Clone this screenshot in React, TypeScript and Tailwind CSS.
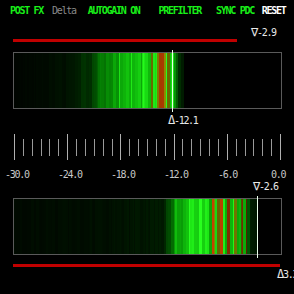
import React from "react";

type Pt = [number, number];

function lerp(points: Pt[], x: number) {
  if (x <= points[0][0]) return points[0][1];
  for (let i = 1; i < points.length; i++) {
    const [x1, y1] = points[i];
    const [x0, y0] = points[i - 1];
    if (x <= x1) return y0 + ((y1 - y0) * (x - x0)) / (x1 - x0);
  }
  return points[points.length - 1][1];
}

function makeRand(seed: number) {
  let s = seed;
  return () => {
    s = (s * 16807) % 2147483647;
    return s / 2147483647;
  };
}

// left edge of the meter box on the page
const BOX_X = 14;

function stripes(level: Pt[], red: [number, number], seed: number) {
  const rand = makeRand(seed);
  const out: { x: number; w: number; fill: string }[] = [];
  let x = BOX_X;
  while (x < 281) {
    const w = 1 + Math.floor(rand() * 3);
    const base = lerp(level, x);
    if (base > 0.005) {
      const l = Math.min(1, base * (0.7 + rand() * 0.45));
      let r = Math.round(40 * l * l * l);
      let g = Math.round(255 * l);
      let b = Math.round(30 * l * l * l);
      if (x >= red[0] && x <= red[1]) {
        const k = rand();
        if (k < 0.2) {
          r = Math.round(205 * l);
          g = Math.round(70 * l);
          b = 0;
        } else if (k < 0.45) {
          r = Math.round(140 * l);
          g = Math.round(140 * l);
          b = 0;
        }
      }
      out.push({ x: x - BOX_X, w, fill: `rgb(${r},${g},${b})` });
    }
    x += w;
  }
  return out;
}

const topBars = stripes(
  [
    [14, 0.02],
    [40, 0.04],
    [70, 0.08],
    [88, 0.22],
    [103, 0.5],
    [118, 0.78],
    [140, 0.92],
    [165, 0.95],
    [172, 0.85],
    [177, 0.3],
    [182, 0.05],
    [183, 0],
  ],
  [148, 167],
  11
);

const bottomBars = stripes(
  [
    [14, 0.04],
    [100, 0.06],
    [160, 0.1],
    [170, 0.35],
    [178, 0.85],
    [200, 0.95],
    [240, 0.85],
    [246, 0.45],
    [250, 0.15],
    [256, 0.08],
    [257, 0],
  ],
  [204, 246],
  29
);

function Meter({
  bars,
  marker,
}: {
  bars: { x: number; w: number; fill: string }[];
  marker: number;
}) {
  return (
    <div className="relative ml-[13px] w-[269px] h-[57px] border border-[#5a5a5a] bg-black">
      <svg width="267" height="55" className="block">
        {bars.map((b, i) => (
          <rect key={i} x={b.x} y={0} width={b.w} height={55} fill={b.fill} />
        ))}
      </svg>
      <div
        className="absolute top-[-3px] bottom-[-4px] w-px bg-[#eaffea]"
        style={{ left: marker - 14 }}
      />
    </div>
  );
}

function Scale() {
  const ticks = Array.from({ length: 31 }, (_, i) => i);
  const labels: [string, number][] = [
    ["-30.0", 5],
    ["-24.0", 58],
    ["-18.0", 111],
    ["-12.0", 164],
    ["-6.0", 218],
    ["0.0", 271],
  ];
  return (
    <svg width="294" height="50" className="block">
      {ticks.map((i) => {
        const x = Math.round(14 + (i * 266) / 30);
        const major = i % 6 === 0;
        return (
          <rect
            key={i}
            x={x}
            y={major ? 4 : 9}
            width={1}
            height={major ? 26 : 17}
            fill={major ? "#b0b0b0" : "#9a9a9a"}
          />
        );
      })}
      {labels.map(([t, x]) => (
        <text
          key={t}
          x={x}
          y={48}
          fill="#c8c8c8"
          fontSize={10}
          letterSpacing={-1.3}
          fontFamily="'DejaVu Sans Mono', monospace"
        >
          {t}
        </text>
      ))}
    </svg>
  );
}

export default function App() {
  return (
    <div className="w-[294px] h-[294px] bg-black overflow-hidden flex flex-col font-['DejaVu_Sans_Mono',monospace] text-[10px] leading-[12px] tracking-[-1.3px]">
      <div className="h-[26px] pt-[5px] flex font-bold">
        <span className="ml-[10px] text-[#19f019]">POST FX</span>
        <span className="ml-[9px] text-[#8a8a8a] font-normal">Delta</span>
        <span className="ml-[12px] text-[#19f019]">AUTOGAIN ON</span>
        <span className="ml-[19px] text-[#19f019]">PREFILTER</span>
        <span className="ml-[15px] text-[#19f019]">SYNC PDC</span>
        <span className="ml-[8px] text-white">RESET</span>
      </div>
      <div className="h-[12px] pl-[251px] text-[#e8e8e8]">
        <span className="text-[12px] font-light">∇</span>-2.9
      </div>
      <div className="mt-[1px] ml-[13px] w-[224px] h-[3px] bg-[#c00000]" />
      <div className="mt-[10px]">
        <Meter bars={topBars} marker={172} />
      </div>
      <div className="mt-[5px] h-[12px] pl-[168px] text-[#e8e8e8]">
        <span className="text-[12px] font-light">Δ</span>-12.1
      </div>
      <div className="mt-[4px]">
        <Scale />
      </div>
      <div className="h-[12px] pl-[253px] text-[#e8e8e8]">
        <span className="text-[12px] font-light">∇</span>-2.6
      </div>
      <div className="mt-[6px]">
        <Meter bars={bottomBars} marker={257} />
      </div>
      <div className="mt-[9px] ml-[13px] w-[267px] h-[3px] bg-[#c00000]" />
      <div className="mt-[1px] h-[12px] pl-[277px] whitespace-nowrap text-[#e8e8e8]">
        <span className="text-[12px] font-light">Δ</span>3.3
      </div>
    </div>
  );
}
